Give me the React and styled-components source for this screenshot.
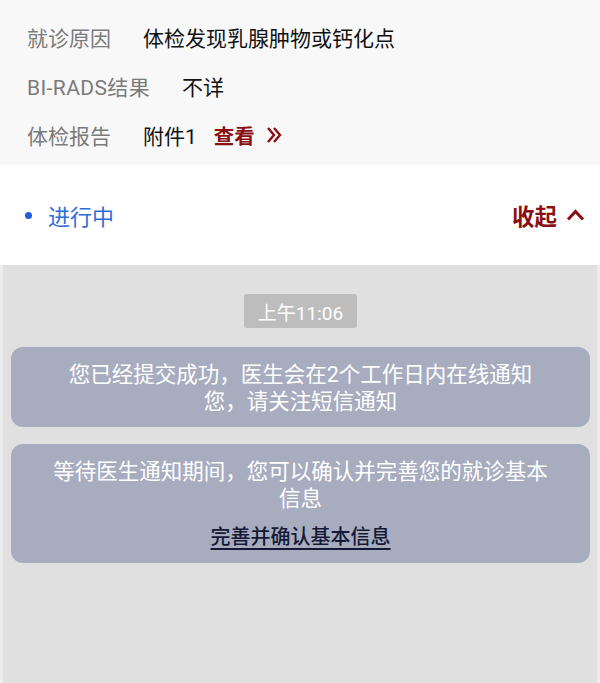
import styled, { createGlobalStyle } from 'styled-components';

const Global = createGlobalStyle`
  html, body {
    margin: 0;
    padding: 0;
    background: #e0e0e0;
  }
  body {
    font-family: Roboto, "Noto Sans CJK SC", sans-serif;
  }
`

const Page = styled.div`
  width: 600px;
  min-height: 683px;
  display: flex;
  flex-direction: column;
  background: #e0e0e0;
`

const Info = styled.section`
  background: #f8f8f8;
  padding: 12px 0 6px 27px;
  display: flex;
  flex-direction: column;
`

const Row = styled.div`
  height: 49px;
  display: flex;
  align-items: center;
  font-size: 21px;
`

const Label = styled.span`
  color: #7b7b7b;
  margin-right: 32px;
  letter-spacing: ${props => props.spacing || '0'};
`

const Value = styled.span`
  color: #111111;
`

const Link = styled.span`
  color: #8a0f12;
  font-weight: 700;
  margin-left: 17px;
  font-size: 20.5px;
  display: inline-flex;
  align-items: center;
  gap: 11px;
`

const Status = styled.div`
  height: 100px;
  background: #ffffff;
  display: flex;
  align-items: center;
  justify-content: space-between;
  padding: 0 15px 0 25px;
`

const Progress = styled.div`
  display: flex;
  align-items: center;
  gap: 16px;
  color: #2f6dd6;
  font-size: 22px;

  &::before {
    content: '';
    width: 7px;
    height: 7px;
    border-radius: 50%;
    background: #1e5fd6;
  }
`

const Collapse = styled.div`
  display: flex;
  align-items: center;
  gap: 9px;
  color: #8a0f12;
  font-size: 22.5px;
  font-weight: 700;
`

const Chat = styled.section`
  flex: 1;
  display: flex;
  flex-direction: column;
  align-items: center;
  padding: 29px 10px 20px 11px;
  border-left: 3px solid #ececec;
  border-right: 3px solid #ececec;
`

const Time = styled.div`
  width: 113px;
  height: 34px;
  border-radius: 3px;
  background: #bdbdbd;
  color: #ffffff;
  font-size: 19px;
  display: flex;
  align-items: center;
  justify-content: center;
  margin-bottom: 19px;
`

const Bubble = styled.div`
  align-self: stretch;
  margin: 0 -3px 17px;
  background: #a7acbf;
  border-radius: 12px;
  padding: 14px 39px 12px;
  color: #ffffff;
  font-size: 21.5px;
  line-height: 27px;
  text-align: center;
`

const Action = styled.div`
  margin-top: 12px;
  color: #141a36;
  font-weight: 500;
  font-size: 20px;
  text-decoration: underline;
  text-underline-offset: 4px;
`

const Chevrons = () => (
  <svg width="16" height="18" viewBox="0 0 16 18">
    <path d="M2 2 L8 9 L2 16 M8 2 L14 9 L8 16" fill="none" stroke="#8a0f12" strokeWidth="2.4" />
  </svg>
)

const Up = () => (
  <svg width="19" height="12" viewBox="0 0 19 12">
    <path d="M2 10.5 L9.5 2.5 L17 10.5" fill="none" stroke="#8a0f12" strokeWidth="3" />
  </svg>
)

export default function App() {
  return (
    <Page>
      <Global />
      <Info>
        <Row>
          <Label>就诊原因</Label>
          <Value>体检发现乳腺肿物或钙化点</Value>
        </Row>
        <Row>
          <Label spacing="0.4px">BI-RADS结果</Label>
          <Value>不详</Value>
        </Row>
        <Row>
          <Label>体检报告</Label>
          <Value>附件1</Value>
          <Link>查看 <Chevrons /></Link>
        </Row>
      </Info>
      <Status>
        <Progress>进行中</Progress>
        <Collapse>收起 <Up /></Collapse>
      </Status>
      <Chat>
        <Time>上午11:06</Time>
        <Bubble>您已经提交成功，医生会在2个工作日内在线通知您，请关注短信通知</Bubble>
        <Bubble>
          等待医生通知期间，您可以确认并完善您的就诊基本信息
          <Action>完善并确认基本信息</Action>
        </Bubble>
      </Chat>
    </Page>
  );
}
